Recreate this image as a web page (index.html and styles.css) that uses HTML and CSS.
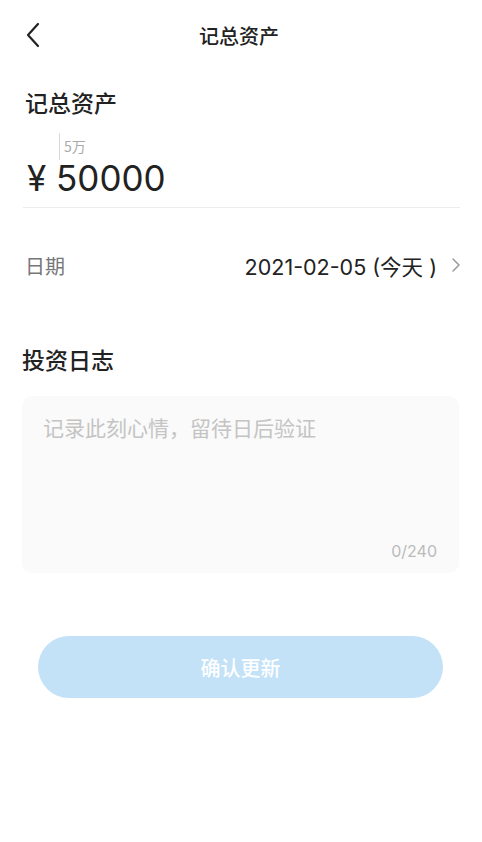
FILE: index.html
```html
<!DOCTYPE html>
<html lang="zh-CN">
<head>
  <meta charset="UTF-8" />
  <meta name="viewport" content="width=device-width, initial-scale=1.0" />
  <title>记总资产</title>
  <link rel="stylesheet" href="styles.css">
</head>
<body>
  <div class="page">
    <div class="navbar">
      <span class="back">
        <svg width="16" height="26" viewBox="0 0 16 26"><path d="M13 2 L3 13 L13 24" fill="none" stroke="#222" stroke-width="2.2" stroke-linecap="round" stroke-linejoin="round"/></svg>
      </span>
      <h1 class="nav-title">记总资产</h1>
    </div>

    <div class="asset">
      <div class="section-label">记总资产</div>
      <div class="hint-row">
        <span class="cursor"></span>
        <span class="unit-hint">5万</span>
      </div>
      <div class="amount">¥ 50000</div>
    </div>

    <div class="date-row">
      <span class="date-label">日期</span>
      <span class="date-value">2021-02-05 (今天 )</span>
      <svg class="arrow" width="10" height="16" viewBox="0 0 10 16"><path d="M2 2 L8 8 L2 14" fill="none" stroke="#999" stroke-width="1.5" stroke-linecap="round" stroke-linejoin="round"/></svg>
    </div>

    <div class="journal">
      <div class="journal-title">投资日志</div>
      <div class="note-box">
        <div class="placeholder">记录此刻心情，留待日后验证</div>
        <div class="counter">0/240</div>
      </div>
    </div>

    <button class="submit">确认更新</button>
  </div>
</body>
</html>
```

FILE: styles.css
```css
body {
  margin: 0;
  background: #fff;
  font-family: "Noto Sans CJK SC", "Noto Sans", sans-serif;
  color: #222;
}
.page {
  width: 482px;
}
.navbar {
  height: 70px;
  display: flex;
  align-items: center;
  justify-content: center;
  position: relative;
}
.back {
  position: absolute;
  left: 25px;
  top: 22px;
}
.nav-title {
  margin: 0 0 0 -4px;
  font-size: 20px;
  font-weight: 500;
}
.asset {
  margin: 0 22px 0 23px;
  padding: 17px 0 11px 2px;
  border-bottom: 1.5px solid #ececec;
}
.section-label {
  font-size: 23px;
  font-weight: 500;
  line-height: 30px;
}
.hint-row {
  display: flex;
  align-items: flex-start;
  height: 27px;
  margin-top: 16px;
  padding-left: 34px;
}
.cursor {
  width: 1px;
  height: 27px;
  background: #d8d8d8;
}
.unit-hint {
  font-size: 14px;
  color: #aaa;
  line-height: 16px;
  margin-left: 4px;
  margin-top: 5px;
}
.amount {
  font-family: "Inter", "Noto Sans", sans-serif;
  font-size: 35px;
  line-height: 36px;
  padding-left: 2px;
}
.date-row {
  display: flex;
  align-items: center;
  padding: 0 21px 0 25px;
  height: 114px;
}
.date-label {
  font-size: 20px;
  color: #777;
  flex: 1;
}
.date-value {
  font-family: "Inter", "Noto Sans CJK SC", sans-serif;
  font-size: 21.5px;
  color: #222;
}
.arrow {
  margin-left: 14px;
}
.journal {
  padding: 0 23px 0 22px;
}
.journal-title {
  font-size: 23px;
  font-weight: 500;
  line-height: 30px;
  margin-top: 22px;
}
.note-box {
  margin-top: 22px;
  height: 177px;
  background: #fafafa;
  border-radius: 10px;
  padding: 16px 22px 12px 21px;
  box-sizing: border-box;
  display: flex;
  flex-direction: column;
  justify-content: space-between;
}
.placeholder {
  font-size: 21px;
  color: #c4c4c4;
  line-height: 30px;
}
.counter {
  align-self: flex-end;
  font-size: 16px;
  line-height: 20px;
  color: #bbb;
  font-family: "Inter", "Noto Sans", sans-serif;
}
.submit {
  display: block;
  width: 405px;
  height: 62px;
  margin: 63px auto 0 38px;
  border: none;
  border-radius: 31px;
  background: #c3e2f8;
  color: #fff;
  font-family: "Noto Sans CJK SC", sans-serif;
  font-size: 20px;
  font-weight: 500;
}
```
